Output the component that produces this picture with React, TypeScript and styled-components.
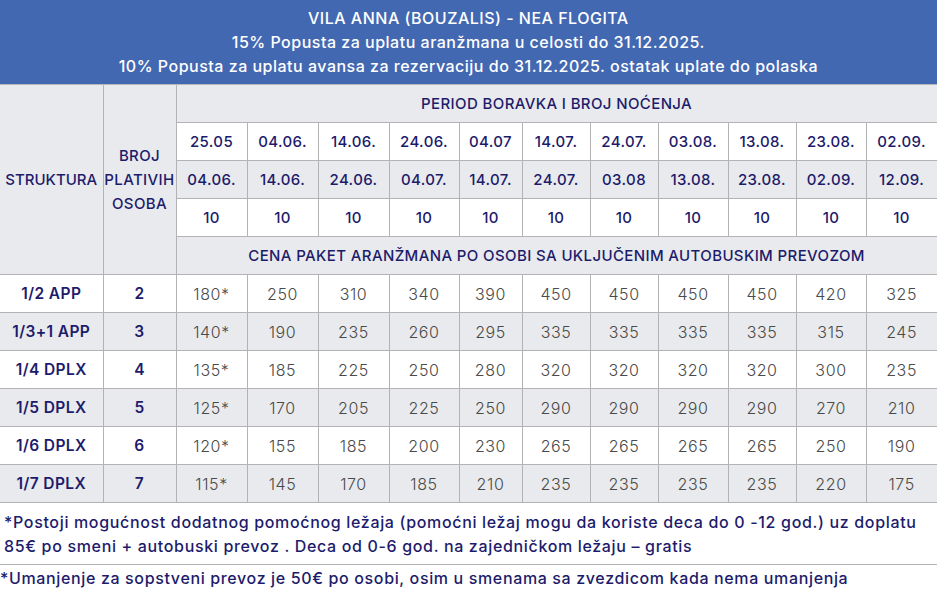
import React from "react";
import styled, { createGlobalStyle } from "styled-components";

const FONT = `"Inter", "Open Sans", sans-serif`;

const Global = createGlobalStyle`
  html, body { margin: 0; padding: 0; background: #fff; }
  body { font-family: ${FONT}; }
`;

const Wrap = styled.div`
  width: 937px;
`;

const Table = styled.table`
  width: 937px;
  table-layout: fixed;
  border-collapse: collapse;
  font-family: ${FONT};
`;

const BlueHead = styled.th`
  background: #4368b2;
  color: #fff;
  font-weight: 500;
  font-size: 16px;
  letter-spacing: 0.5px;
  line-height: 24px;
  height: 84px;
  padding: 0;
  text-align: center;
  border-right: 1px solid #4368b2;
  border-bottom: 1px solid #b5b7bc;
`;

const HeadCell = styled.th<{ $bg?: string; $edge?: boolean }>`
  background: ${(p) => p.$bg || "#e9eaed"};
  color: #1d1b6b;
  font-weight: 500;
  font-size: 15px;
  letter-spacing: ${(p) => (p.$edge ? "0" : "0.38px")};
  line-height: 24px;
  height: 37px;
  padding: 0;
  text-align: center;
  border: 1px solid #b3b3b3;
  ${(p) => (p.$edge ? "border-left: none;" : "")}
`;

const LabelCell = styled.td<{ $grey: boolean; $edge?: boolean }>`
  background: ${(p) => (p.$grey ? "#e9eaed" : "#fff")};
  color: #1d1b6b;
  font-weight: 600;
  font-size: 15.5px;
  letter-spacing: 0.4px;
  height: 37px;
  padding: 0;
  text-align: center;
  border: 1px solid #b3b3b3;
  ${(p) => (p.$edge ? "border-left: none;" : "")}
`;

const PriceCell = styled.td<{ $grey: boolean }>`
  background: ${(p) => (p.$grey ? "#e9eaed" : "#fff")};
  color: #4a4a4a;
  font-weight: 300;
  font-size: 16px;
  letter-spacing: 0.6px;
  height: 37px;
  padding: 0;
  text-align: center;
  border: 1px solid #b3b3b3;
`;

const NoteCell = styled.td`
  background: #fff;
  color: #1d1b6b;
  font-weight: 500;
  font-size: 16px;
  letter-spacing: 0.66px;
  line-height: 24px;
  height: 61px;
  padding: 0 0 0 4px;
  text-align: left;
  border: 1px solid #b3b3b3;
  border-left: none;
`;

const FootLine = styled.p`
  margin: 0;
  color: #1d1b6b;
  font-weight: 500;
  font-size: 16px;
  letter-spacing: 0.64px;
  line-height: 24px;
  padding-top: 1px;
`;

const widths = [103, 73, 71, 71, 71, 70, 63, 68, 68, 70, 68, 70, 71];
const from = ["25.05", "04.06.", "14.06.", "24.06.", "04.07", "14.07.", "24.07.", "03.08.", "13.08.", "23.08.", "02.09."];
const to = ["04.06.", "14.06.", "24.06.", "04.07.", "14.07.", "24.07.", "03.08", "13.08.", "23.08.", "02.09.", "12.09."];

const rows: { name: string; n: number; prices: string[] }[] = [
  { name: "1/2 APP", n: 2, prices: ["180*", "250", "310", "340", "390", "450", "450", "450", "450", "420", "325"] },
  { name: "1/3+1 APP", n: 3, prices: ["140*", "190", "235", "260", "295", "335", "335", "335", "335", "315", "245"] },
  { name: "1/4 DPLX", n: 4, prices: ["135*", "185", "225", "250", "280", "320", "320", "320", "320", "300", "235"] },
  { name: "1/5 DPLX", n: 5, prices: ["125*", "170", "205", "225", "250", "290", "290", "290", "290", "270", "210"] },
  { name: "1/6 DPLX", n: 6, prices: ["120*", "155", "185", "200", "230", "265", "265", "265", "265", "250", "190"] },
  { name: "1/7 DPLX", n: 7, prices: ["115*", "145", "170", "185", "210", "235", "235", "235", "235", "220", "175"] },
];

export default function App() {
  return (
    <Wrap>
      <Global />
      <Table>
        <colgroup>
          {widths.map((w, i) => (
            <col key={i} style={{ width: w }} />
          ))}
        </colgroup>
        <thead>
          <tr>
            <BlueHead colSpan={13}>
              VILA ANNA (BOUZALIS) - NEA FLOGITA
              <br />
              15% Popusta za uplatu aranžmana u celosti do 31.12.2025.
              <br />
              10% Popusta za uplatu avansa za rezervaciju do 31.12.2025. ostatak uplate do polaska
            </BlueHead>
          </tr>
          <tr>
            <HeadCell rowSpan={5} $edge>STRUKTURA</HeadCell>
            <HeadCell rowSpan={5}>
              BROJ
              <br />
              PLATIVIH
              <br />
              OSOBA
            </HeadCell>
            <HeadCell colSpan={11}>PERIOD BORAVKA I BROJ NOĆENJA</HeadCell>
          </tr>
          <tr>
            {from.map((d, i) => (
              <HeadCell key={i} $bg="#fff">{d}</HeadCell>
            ))}
          </tr>
          <tr>
            {to.map((d, i) => (
              <HeadCell key={i}>{d}</HeadCell>
            ))}
          </tr>
          <tr>
            {to.map((_, i) => (
              <HeadCell key={i} $bg="#fff">10</HeadCell>
            ))}
          </tr>
          <tr>
            <HeadCell colSpan={11}>CENA PAKET ARANŽMANA PO OSOBI SA UKLJUČENIM AUTOBUSKIM PREVOZOM</HeadCell>
          </tr>
        </thead>
        <tbody>
          {rows.map((r, ri) => (
            <tr key={r.name}>
              <LabelCell $grey={ri % 2 === 1} $edge>{r.name}</LabelCell>
              <LabelCell $grey={ri % 2 === 1}>{r.n}</LabelCell>
              {r.prices.map((p, pi) => (
                <PriceCell key={pi} $grey={ri % 2 === 1}>{p}</PriceCell>
              ))}
            </tr>
          ))}
          <tr>
            <NoteCell colSpan={13}>
              *Postoji mogućnost dodatnog pomoćnog ležaja (pomoćni ležaj mogu da koriste deca do 0 -12 god.) uz doplatu
              <br />
              85€ po smeni + autobuski prevoz . Deca od 0-6 god. na zajedničkom ležaju – gratis
            </NoteCell>
          </tr>
        </tbody>
      </Table>
      <FootLine>*Umanjenje za sopstveni prevoz je 50€ po osobi, osim u smenama sa zvezdicom kada nema umanjenja</FootLine>
    </Wrap>
  );
}
